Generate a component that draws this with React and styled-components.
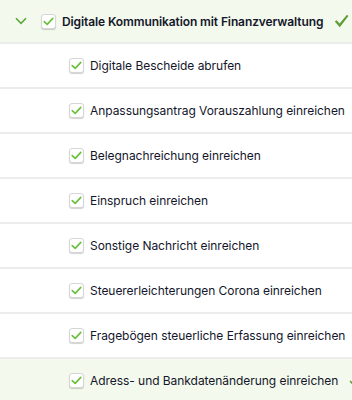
import React from 'react';
import styled, { createGlobalStyle } from 'styled-components';

const GlobalStyle = createGlobalStyle`
  html, body {
    margin: 0;
    padding: 0;
    background: #fff;
    font-family: Inter, "Open Sans", sans-serif;
  }
`;

const List = styled.div`
  width: 352px;
  height: 400px;
  overflow: hidden;
  display: flex;
  flex-direction: column;
`;

const Row = styled.div`
  display: flex;
  align-items: center;
  flex-shrink: 0;
  height: ${({ $header }) => ($header ? '42px' : '43px')};
  padding-left: ${({ $header }) => ($header ? '15px' : '69px')};
  background: ${({ $active }) => ($active ? '#f3f9ec' : '#fff')};
  border-bottom: 2px solid #ececec;
  white-space: nowrap;
`;

const Chevron = styled.svg`
  width: 12px;
  height: 8px;
  margin-right: 14px;
  flex-shrink: 0;
`;

const Box = styled.span`
  width: 15px;
  height: 15px;
  box-sizing: border-box;
  border: 1px solid #d6d6d6;
  border-radius: 3px;
  background: #fff;
  box-shadow: 0 1px 1px rgba(0, 0, 0, 0.18);
  display: flex;
  align-items: center;
  justify-content: center;
  flex-shrink: 0;
  margin-right: 6px;
`;

const Label = styled.span`
  font-size: 12px;
  font-weight: ${({ $header }) => ($header ? 600 : 400)};
  color: #14162b;
  letter-spacing: ${({ $header }) => ($header ? '-0.1px' : '-0.05px')};
`;

const DoneMark = styled.svg`
  width: ${({ $small }) => ($small ? '10px' : '15px')};
  height: ${({ $small }) => ($small ? '10px' : '14px')};
  margin-left: 11px;
  flex-shrink: 0;
`;

const tasks = [
  'Digitale Bescheide abrufen',
  'Anpassungsantrag Vorauszahlung einreichen',
  'Belegnachreichung einreichen',
  'Einspruch einreichen',
  'Sonstige Nachricht einreichen',
  'Steuererleichterungen Corona einreichen',
  'Fragebögen steuerliche Erfassung einreichen',
  'Adress- und Bankdatenänderung einreichen',
];

const Tick = () => (
  <svg width="11" height="9" viewBox="0 0 11 9">
    <path d="M1.2 4.6 L4.2 7.4 L9.8 1.4" fill="none" stroke="#6abf3a" strokeWidth="1.6" strokeLinecap="round" strokeLinejoin="round" />
  </svg>
);

const Done = ({ small }) => (
  <DoneMark $small={small} viewBox="0 0 15 14">
    <path d="M0.8 7.6 L2.6 6.2 L5.6 9.6 L13 0.8 L14.4 2 L5.8 13.2 Z" fill="#5e9c34" />
  </DoneMark>
);

export default function App() {
  return (
    <>
      <GlobalStyle />
      <List>
        <Row $header $active>
          <Chevron viewBox="0 0 12 8">
            <path d="M1 1.2 L6 6.4 L11 1.2" fill="none" stroke="#5aa83a" strokeWidth="1.6" />
          </Chevron>
          <Box><Tick /></Box>
          <Label $header>Digitale Kommunikation mit Finanzverwaltung</Label>
          <Done />
        </Row>
        {tasks.map((t, i) => {
          const last = i === tasks.length - 1;
          return (
            <Row key={t} $active={last}>
              <Box><Tick /></Box>
              <Label>{t}</Label>
              {last && <Done small />}
            </Row>
          );
        })}
      </List>
    </>
  );
}
